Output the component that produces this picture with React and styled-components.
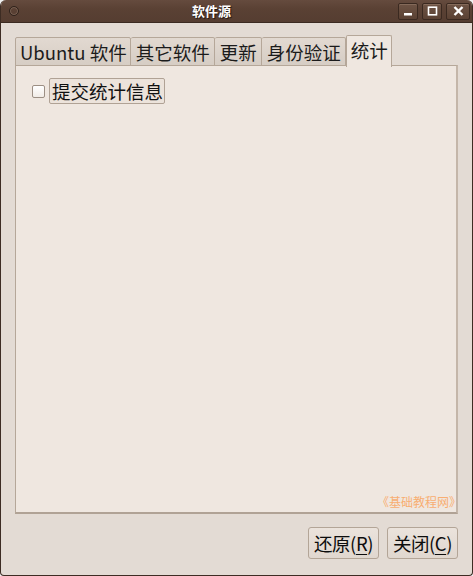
import React, { useState } from "react";
import styled, { createGlobalStyle } from "styled-components";

const GlobalStyle = createGlobalStyle`
  html, body {
    margin: 0;
    padding: 0;
    background: #f2f2f2;
  }
  body {
    font-family: "Noto Sans CJK SC", "DejaVu Sans", sans-serif;
  }
`

const Window = styled.div`
  width: 473px;
  height: 576px;
  box-sizing: border-box;
  display: flex;
  flex-direction: column;
  background: #e3dbd4;
  border: 1px solid #3d2c23;
  border-top: none;
  border-radius: 6px 6px 4px 4px;
  overflow: hidden;
`

const TitleBar = styled.div`
  height: 22px;
  flex: none;
  display: flex;
  align-items: center;
  background: linear-gradient(#654b3e, #5a4134 40%, #553d31);
  border-bottom: 1px solid #3b2a21;
  padding: 0 2px 0 8px;
`

const MenuDot = styled.div`
  width: 10px;
  height: 10px;
  border-radius: 50%;
  border: 1.5px solid #2f221b;
  box-shadow: inset 0 0 0 1px #7a6152;
  box-sizing: border-box;
`

const Title = styled.div`
  flex: 1;
  text-align: center;
  color: #fff;
  font-weight: bold;
  font-size: 13px;
  line-height: 22px;
  text-shadow: 1px 1px 1px #1f1510;
  margin-left: 6px;
`

const WinButtons = styled.div`
  display: flex;
  gap: 4px;
`

const WinButton = styled.div`
  width: ${({ wide }) => (wide ? 24 : 20)}px;
  height: 17px;
  box-sizing: border-box;
  border: 1px solid #3a2920;
  border-radius: 2px;
  background: linear-gradient(#6e5445, #5a4133);
  box-shadow: inset 0 1px 0 #846a5a;
  display: flex;
  align-items: center;
  justify-content: center;
`

const Body = styled.div`
  flex: 1;
  display: flex;
  flex-direction: column;
  padding: 12px 14px 16px 14px;
`

const TabRow = styled.div`
  display: flex;
  align-items: flex-end;
  height: 31px;
  position: relative;
  z-index: 1;
`

const Tab = styled.div`
  height: ${({ active }) => (active ? 32 : 29)}px;
  box-sizing: border-box;
  padding: ${({ first, active }) => (first || active ? "0 3px 0 4px" : "0 4px 0 5px")};
  font-size: 18.5px;
  line-height: 28px;
  color: #1b1b1b;
  background: ${({ active }) => (active ? "#efe7e0" : "linear-gradient(#e2d9d1, #d6cdc4)")};
  border: 1px solid #b5a799;
  border-bottom: ${({ active }) => (active ? "none" : "1px solid #b5a799")};
  border-left: ${({ first, active }) => (first || active ? "1px solid #b5a799" : "none")};
  border-radius: 2px 2px 0 0;
  margin-bottom: ${({ active }) => (active ? -1 : 0)}px;
  white-space: nowrap;
`

const Panel = styled.div`
  flex: 1;
  margin-top: -1px;
  background: #efe7e0;
  border: 1px solid #b5a799;
  border-bottom: 2px solid #b0a295;
  border-right: 2px solid #c4b6a9;
  position: relative;
  padding: 12px 16px;
`

const CheckRow = styled.div`
  display: flex;
  align-items: center;
  gap: 4px;
`

const CheckBox = styled.div`
  width: 13px;
  height: 13px;
  box-sizing: border-box;
  border: 1px solid #9c8f84;
  border-radius: 2px;
  background: linear-gradient(#ffffff, #f1ece7);
`

const CheckLabel = styled.div`
  font-size: 18.5px;
  line-height: 24px;
  color: #111;
  border: 1px solid #b0a295;
  border-radius: 2px;
  padding: 0 1px 0 2px;
  background: #ece3db;
`

const Watermark = styled.div`
  position: absolute;
  right: -5px;
  bottom: 2px;
  font-size: 12px;
  color: #f8ae72;
`

const Footer = styled.div`
  display: flex;
  justify-content: flex-end;
  gap: 8px;
  padding-top: 13px;
`

const Button = styled.div`
  width: 71px;
  height: 32px;
  box-sizing: border-box;
  border: 1px solid #b3a597;
  border-radius: 3px;
  background: linear-gradient(#ebe3dc, #e0d7cf);
  font-size: 18.5px;
  line-height: 30px;
  text-align: center;
  color: #0d0d0d;
  white-space: nowrap;
  letter-spacing: -0.5px;
`

const Mnemonic = styled.span`
  text-decoration: underline;
  text-underline-offset: 3px;
`

const tabs = ["Ubuntu 软件", "其它软件", "更新", "身份验证", "统计"]

const App = () => {
  const [active] = useState(4)
  return (
    <>
      <GlobalStyle />
      <Window>
        <TitleBar>
          <MenuDot />
          <Title>软件源</Title>
          <WinButtons>
            <WinButton>
              <svg width="10" height="10" viewBox="0 0 10 10">
                <rect x="1" y="7" width="8" height="2.5" fill="#fff" />
              </svg>
            </WinButton>
            <WinButton>
              <svg width="11" height="10" viewBox="0 0 11 10">
                <rect x="1.5" y="1.2" width="8" height="7.6" fill="none" stroke="#fff" strokeWidth="1.6" />
              </svg>
            </WinButton>
            <WinButton wide>
              <svg width="11" height="10" viewBox="0 0 11 10">
                <path d="M1.5 1 L9.5 9 M9.5 1 L1.5 9" stroke="#fff" strokeWidth="2.4" />
              </svg>
            </WinButton>
          </WinButtons>
        </TitleBar>
        <Body>
          <TabRow>
            {tabs.map((t, i) => (
              <Tab key={t} first={i === 0} active={i === active}>{t}</Tab>
            ))}
          </TabRow>
          <Panel>
            <CheckRow>
              <CheckBox />
              <CheckLabel>提交统计信息</CheckLabel>
            </CheckRow>
            <Watermark>《基础教程网》</Watermark>
          </Panel>
          <Footer>
            <Button>还原(<Mnemonic>R</Mnemonic>)</Button>
            <Button>关闭(<Mnemonic>C</Mnemonic>)</Button>
          </Footer>
        </Body>
      </Window>
    </>
  )
}

export default App
